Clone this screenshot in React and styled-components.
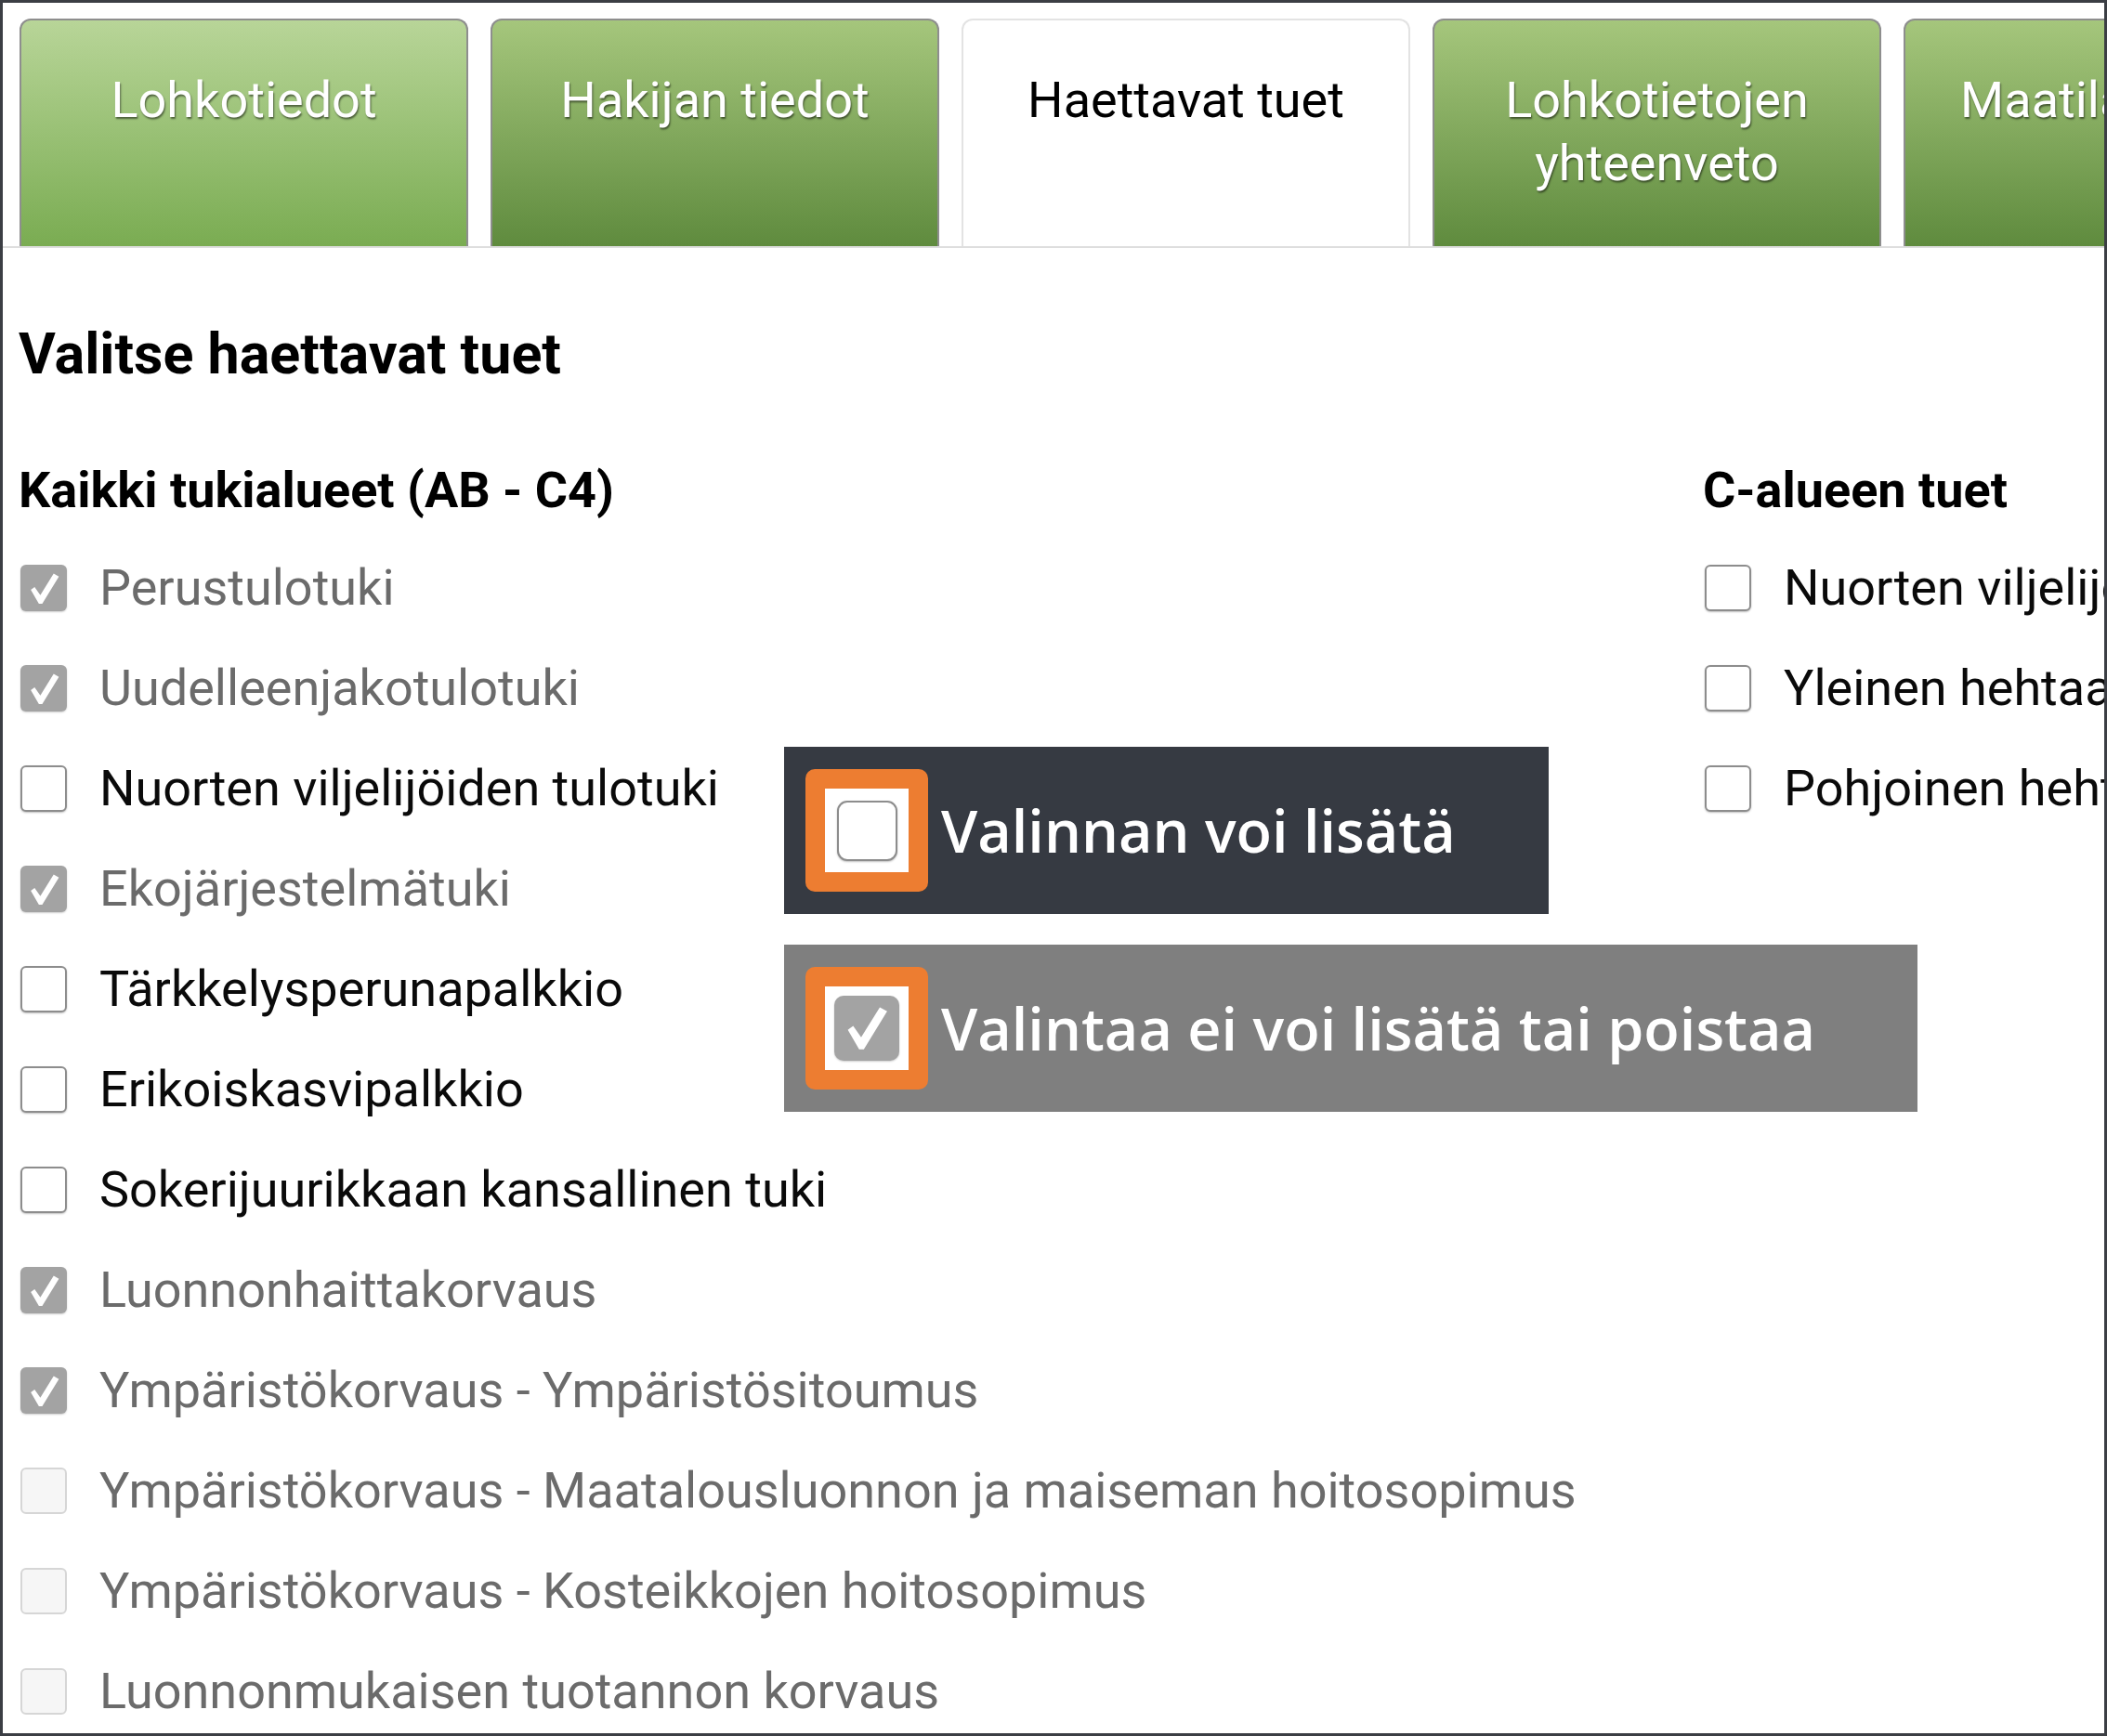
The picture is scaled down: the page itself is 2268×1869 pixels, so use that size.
import React from 'react';
import styled, { createGlobalStyle, css } from 'styled-components';

const GlobalStyle = createGlobalStyle`
  html, body {
    margin: 0;
    padding: 0;
    background: #ffffff;
  }
  body {
    font-family: Roboto, "Liberation Sans", Arial, sans-serif;
  }
`;

const Frame = styled.div`
  position: relative;
  width: 2268px;
  height: 1869px;
  box-sizing: border-box;
  border: 3px solid #3b3e44;
  background: #ffffff;
  overflow: hidden;
`;

const TabBar = styled.div`
  display: flex;
  gap: 24px;
  padding: 17px 0 0 18px;
  border-bottom: 2px solid #dedede;
`;

const Tab = styled.div`
  flex: 0 0 483px;
  height: 245px;
  box-sizing: border-box;
  padding: 52px 40px 0;
  border-radius: 12px 12px 0 0;
  text-align: center;
  font-size: 54px;
  line-height: 68px;
  color: #ffffff;
  text-shadow: 1px 2px 2px rgba(0, 0, 0, 0.5);
  border: 2px solid #8e8e8e;
  border-bottom: none;
  background: linear-gradient(#a5c67c, #5f8b3e);

  ${(p) =>
    p.$light &&
    css`
      background: linear-gradient(#b8d598, #7aac52);
    `}

  ${(p) =>
    p.$active &&
    css`
      background: #ffffff;
      color: #000000;
      text-shadow: none;
      border: 2px solid #e3e3e3;
      border-bottom: none;
    `}
`;

const Content = styled.div`
  padding-left: 17px;
`;

const Heading = styled.h1`
  margin: 78px 0 0;
  font-size: 61px;
  line-height: 72px;
  font-weight: 700;
  color: #000000;
`;

const Columns = styled.div`
  display: grid;
  grid-template-columns: 1813px 1fr;
  margin-top: 79px;
`;

const Column = styled.div`
  display: flex;
  flex-direction: column;
  min-width: 0;
`;

const SubHeading = styled.h2`
  margin: 0 0 19px;
  font-size: 54px;
  line-height: 64px;
  font-weight: 700;
  color: #000000;
  white-space: nowrap;
`;

const Row = styled.div`
  display: flex;
  align-items: center;
  gap: 35px;
  height: 108px;
  padding-left: 2px;
`;

const Label = styled.span`
  font-size: 54px;
  line-height: 64px;
  white-space: nowrap;
  color: ${(p) => (p.$disabled ? '#6b6b6b' : '#0a0a0a')};
`;

const Box = styled.span`
  flex: 0 0 auto;
  display: flex;
  align-items: center;
  justify-content: center;
  width: ${(p) => p.$size}px;
  height: ${(p) => p.$size}px;
  box-sizing: border-box;
  border-radius: ${(p) => p.$radius}px;

  ${(p) =>
    p.$state === 'open' &&
    css`
      background: #ffffff;
      border: 2px solid #8d8d8d;
      box-shadow: 0 1px 2px rgba(0, 0, 0, 0.25);
    `}

  ${(p) =>
    p.$state === 'locked' &&
    css`
      background: #a3a3a3;
      box-shadow: 0 1px 2px rgba(0, 0, 0, 0.2);
    `}

  ${(p) =>
    p.$state === 'empty' &&
    css`
      background: #f6f6f6;
      border: 2px solid #d6d6d6;
    `}

  svg {
    width: 82%;
    height: 82%;
  }
`;

const Legend = styled.div`
  position: absolute;
  left: 841px;
  top: ${(p) => p.$top}px;
  width: ${(p) => p.$width}px;
  height: 180px;
  box-sizing: border-box;
  padding-left: 23px;
  display: flex;
  align-items: center;
  gap: 14px;
  background: ${(p) => p.$bg};
`;

const Marker = styled.span`
  flex: 0 0 auto;
  width: 132px;
  height: 132px;
  border-radius: 10px;
  background: #ed7d31;
  display: flex;
  align-items: center;
  justify-content: center;
`;

const MarkerInner = styled.span`
  width: 90px;
  height: 90px;
  background: #ffffff;
  display: flex;
  align-items: center;
  justify-content: center;
`;

const LegendText = styled.span`
  font-family: "Open Sans", "Noto Sans", sans-serif;
  font-weight: 600;
  font-size: 63px;
  line-height: 80px;
  color: #ffffff;
  white-space: nowrap;
`;

const Check = () => (
  <svg viewBox="0 0 40 40">
    <polygon points="6,21.5 10,18.5 16,27 30,4.5 35.5,7.5 18,36 14.5,36" fill="#ffffff" />
  </svg>
);

const CheckBox = ({ state, size = 50, radius = 6 }) => (
  <Box $state={state} $size={size} $radius={radius}>
    {state === 'locked' && <Check />}
  </Box>
);

const tabs = [
  { label: 'Lohkotiedot', light: true },
  { label: 'Hakijan tiedot' },
  { label: 'Haettavat tuet', active: true },
  { label: 'Lohkotietojen yhteenveto' },
  { label: 'Maatilan tiedot' },
];

const allAreas = [
  { label: 'Perustulotuki', state: 'locked' },
  { label: 'Uudelleenjakotulotuki', state: 'locked' },
  { label: 'Nuorten viljelijöiden tulotuki', state: 'open' },
  { label: 'Ekojärjestelmätuki', state: 'locked' },
  { label: 'Tärkkelysperunapalkkio', state: 'open' },
  { label: 'Erikoiskasvipalkkio', state: 'open' },
  { label: 'Sokerijuurikkaan kansallinen tuki', state: 'open' },
  { label: 'Luonnonhaittakorvaus', state: 'locked' },
  { label: 'Ympäristökorvaus - Ympäristösitoumus', state: 'locked' },
  { label: 'Ympäristökorvaus - Maatalousluonnon ja maiseman hoitosopimus', state: 'empty' },
  { label: 'Ympäristökorvaus - Kosteikkojen hoitosopimus', state: 'empty' },
  { label: 'Luonnonmukaisen tuotannon korvaus', state: 'empty' },
];

const cAreas = [
  { label: 'Nuorten viljelijöiden kansallinen tuki', state: 'open' },
  { label: 'Yleinen hehtaarituki', state: 'open' },
  { label: 'Pohjoinen hehtaarituki', state: 'open' },
];

const OptionList = ({ title, items }) => (
  <Column>
    <SubHeading>{title}</SubHeading>
    {items.map((item) => (
      <Row key={item.label}>
        <CheckBox state={item.state} />
        <Label $disabled={item.state !== 'open'}>{item.label}</Label>
      </Row>
    ))}
  </Column>
);

const App = () => {
  return (
    <>
      <GlobalStyle />
      <Frame>
        <TabBar>
          {tabs.map((tab) => (
            <Tab key={tab.label} $active={tab.active} $light={tab.light}>
              {tab.label}
            </Tab>
          ))}
        </TabBar>

        <Content>
          <Heading>Valitse haettavat tuet</Heading>
          <Columns>
            <OptionList title="Kaikki tukialueet (AB - C4)" items={allAreas} />
            <OptionList title="C-alueen tuet" items={cAreas} />
          </Columns>
        </Content>

        <Legend $top={801} $width={823} $bg="#363a42">
          <Marker>
            <MarkerInner>
              <CheckBox state="open" size={65} radius={11} />
            </MarkerInner>
          </Marker>
          <LegendText>Valinnan voi lisätä</LegendText>
        </Legend>

        <Legend $top={1014} $width={1220} $bg="#7f7f7f">
          <Marker>
            <MarkerInner>
              <CheckBox state="locked" size={70} radius={10} />
            </MarkerInner>
          </Marker>
          <LegendText>Valintaa ei voi lisätä tai poistaa</LegendText>
        </Legend>
      </Frame>
    </>
  );
};

export default App;
